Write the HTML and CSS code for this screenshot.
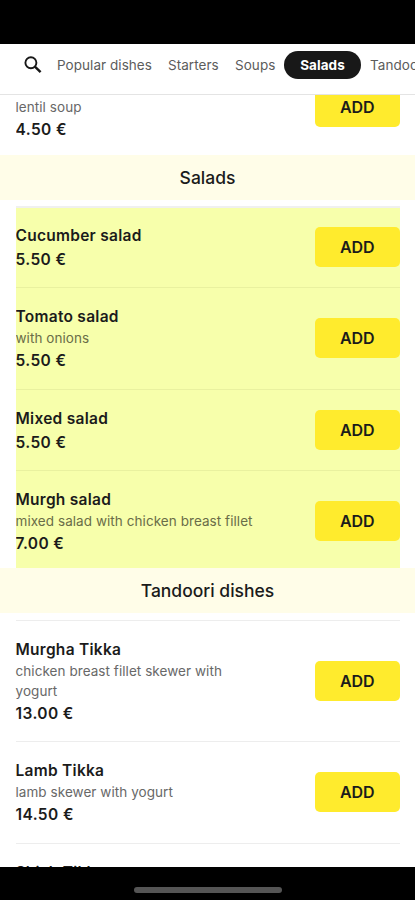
FILE: index.html
```html
<!DOCTYPE html>
<html lang="en">
<head>
<meta charset="utf-8">
<meta name="viewport" content="width=device-width, initial-scale=1">
<title>Menu</title>
<link rel="stylesheet" href="styles.css">
</head>
<body>
<div class="phone">
  <div class="status-bar"></div>
  <nav class="nav">
    <svg class="search" viewBox="0 0 18 18" fill="none" stroke="#181818" stroke-width="1.9"><circle cx="6.9" cy="6.7" r="5.5"/><path d="M10.9 10.6L16.6 16.2" stroke-width="2.4"/></svg>
    <a class="tab popular">Popular dishes</a>
    <a class="tab starters">Starters</a>
    <a class="tab soups">Soups</a>
    <a class="tab active">Salads</a>
    <a class="tab">Tandoori dishes</a>
  </nav>
  <main class="menu">
    <section class="list soups-list">
      <article class="dish">
        <div class="info"><p>lentil soup</p><strong>4.50 €</strong></div>
        <button class="add">ADD</button>
      </article>
    </section>
    <h2 class="category">Salads</h2>
    <section class="list highlighted">
      <article class="dish">
        <div class="info"><h3>Cucumber salad</h3><strong>5.50 €</strong></div>
        <button class="add">ADD</button>
      </article>
      <article class="dish">
        <div class="info"><h3>Tomato salad</h3><p>with onions</p><strong>5.50 €</strong></div>
        <button class="add">ADD</button>
      </article>
      <article class="dish">
        <div class="info"><h3>Mixed salad</h3><strong>5.50 €</strong></div>
        <button class="add">ADD</button>
      </article>
      <article class="dish">
        <div class="info"><h3>Murgh salad</h3><p>mixed salad with chicken breast fillet</p><strong>7.00 €</strong></div>
        <button class="add">ADD</button>
      </article>
    </section>
    <h2 class="category">Tandoori dishes</h2>
    <section class="list tandoori-list">
      <article class="dish">
        <div class="info"><h3>Murgha Tikka</h3><p>chicken breast fillet skewer with yogurt</p><strong>13.00 €</strong></div>
        <button class="add">ADD</button>
      </article>
      <article class="dish">
        <div class="info"><h3>Lamb Tikka</h3><p>lamb skewer with yogurt</p><strong>14.50 €</strong></div>
        <button class="add">ADD</button>
      </article>
      <article class="dish">
        <div class="info"><h3>Shish Tikka</h3></div>
      </article>
    </section>
  </main>
  <footer class="home-bar"><span class="handle"></span></footer>
</div>
</body>
</html>
```
FILE: styles.css
```css
* { box-sizing: border-box; margin: 0; padding: 0; }

body {
  background: #fff;
  color: #1b1b1b;
  font-family: Inter, "Liberation Sans", sans-serif;
}

.phone {
  display: flex;
  flex-direction: column;
  height: 900px;
  overflow: hidden;
}

.status-bar {
  flex: none;
  height: 44px;
  background: #000;
}

.nav {
  flex: none;
  display: flex;
  align-items: center;
  height: 51px;
  padding: 0 0 9px 24px;
  border-bottom: 1px solid #e4e4e4;
  overflow: hidden;
  white-space: nowrap;
}

.search {
  flex: none;
  width: 18px;
  height: 18px;
  margin-right: 15px;
}

.tab {
  flex: none;
  font-size: 13.5px;
  letter-spacing: 0.05px;
  line-height: 28px;
  color: #5c5c5c;
}

.popular { width: 111px; }
.starters { width: 67px; }
.soups { width: 49px; }

.active {
  width: 77px;
  margin-right: 9px;
  border-radius: 14px;
  background: #181818;
  color: #fff;
  font-weight: 700;
  text-align: center;
}

.menu {
  flex: 1;
  min-height: 0;
  overflow: hidden;
}

.list { margin: 0 15px 0 15.5px; }

.soups-list {
  display: flex;
  flex-direction: column;
  justify-content: flex-end;
  height: 59.5px;
  overflow: hidden;
}

.soups-list .dish {
  flex: none;
  padding-bottom: 14px;
}

.soups-list .info { padding-top: 24px; }

.highlighted {
  height: 362px;
  background: #f7ffab;
  overflow: hidden;
}

.category {
  height: 45px;
  margin-bottom: 6px;
  background: #fffde8;
  font-size: 17.5px;
  font-weight: 500;
  line-height: 45px;
  text-align: center;
}

.dish {
  display: flex;
  align-items: center;
  justify-content: space-between;
  padding: 16.25px 0;
  border-top: 1px solid #ededed;
}

.highlighted .dish { border-color: #e9f19f; }
.highlighted .dish:first-child { border-top: 2px solid #f0f0ef; padding-top: 15.25px; }

.tandoori-list { margin-top: 7px; }

.info {
  display: flex;
  flex-direction: column;
  width: 242px;
}

.info h3,
.info strong {
  padding-top: 1px;
  font-size: 15.5px;
  font-weight: 600;
  letter-spacing: 0.27px;
  line-height: 23px;
}

.info strong { letter-spacing: 0.4px; }

.info p {
  font-size: 13.5px;
  letter-spacing: 0.06px;
  line-height: 20px;
  color: #686868;
}

.highlighted .info p { color: #6a6d48; }

.add {
  flex: none;
  width: 85.5px;
  height: 40px;
  border: 0;
  border-radius: 5px;
  background: #ffeb2d;
  color: #1b1b1b;
  font: 600 16px Inter, "Liberation Sans", sans-serif;
}

.home-bar {
  flex: none;
  display: flex;
  justify-content: center;
  height: 33px;
  padding-top: 20px;
  background: #000;
}

.handle {
  width: 148px;
  height: 6px;
  border-radius: 3px;
  background: #555;
}
```
